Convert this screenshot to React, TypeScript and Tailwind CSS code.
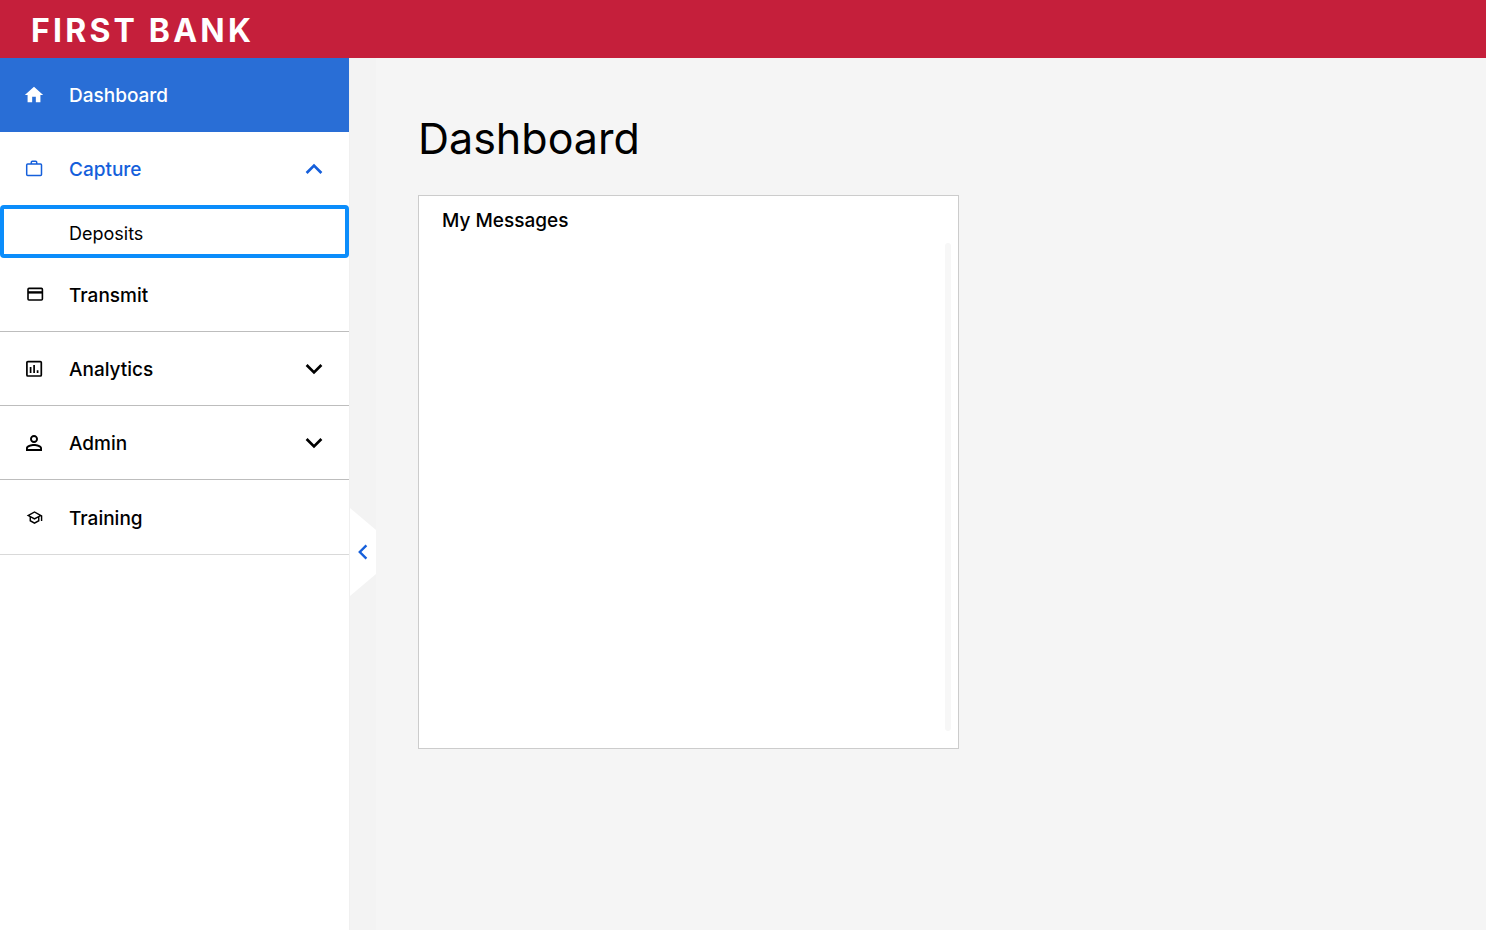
import React, { useState } from 'react';
import clsx from 'clsx';
import { MdHome, MdPersonOutline, MdOutlineSchool } from 'react-icons/md';

type IconType = React.ComponentType<{ className?: string }>;

interface NavItem {
  label: string;
  icon: IconType;
  iconClass: string;
  children?: string[];
}

const CaptureIcon = ({ className }: { className?: string }) => (
  <svg viewBox="0 0 20 20" fill="none" stroke="currentColor" strokeWidth="1.5" className={className}>
    <rect x="2.7" y="5" width="14.8" height="11.4" rx="1" />
    <path d="M7.3 5V3.2a1 1 0 0 1 1-1h3.4a1 1 0 0 1 1 1V5" />
  </svg>
);

const TransmitIcon = ({ className }: { className?: string }) => (
  <svg viewBox="0 0 20 20" fill="none" stroke="currentColor" strokeWidth="1.6" className={className}>
    <rect x="4" y="3.4" width="14.4" height="11.6" rx="1" />
    <path d="M4 7.4h14.4" strokeWidth="2.4" />
  </svg>
);

const AnalyticsIcon = ({ className }: { className?: string }) => (
  <svg viewBox="0 0 20 20" fill="none" stroke="currentColor" strokeWidth="1.7" className={className}>
    <rect x="2.9" y="2.6" width="14.4" height="14.4" rx="1" />
    <path d="M6.6 8v6M10.1 6v8M13.6 11.2V14" />
  </svg>
);

const Chevron = ({ open }: { open: boolean }) => (
  <svg
    viewBox="0 0 20 20"
    fill="none"
    stroke="currentColor"
    strokeWidth="2.7"
    className={clsx('size-5 shrink-0', open && 'rotate-180')}
  >
    <path d="M2.6 6 10 13.4 17.4 6" />
  </svg>
);

const navItems: NavItem[] = [
  { label: 'Dashboard', icon: MdHome, iconClass: 'size-[22px]' },
  { label: 'Capture', icon: CaptureIcon, iconClass: 'size-5', children: ['Deposits'] },
  { label: 'Transmit', icon: TransmitIcon, iconClass: 'size-5' },
  { label: 'Analytics', icon: AnalyticsIcon, iconClass: 'size-5', children: [] },
  { label: 'Admin', icon: MdPersonOutline, iconClass: 'size-6', children: [] },
  { label: 'Training', icon: MdOutlineSchool, iconClass: 'size-[17px]' },
];

const Sidebar = () => {
  const [active, setActive] = useState('Dashboard');
  const [openItem, setOpenItem] = useState('Capture');

  return (
    <nav className="w-[349px] shrink-0 bg-white">
      {navItems.map((item) => {
        const Icon = item.icon;
        const isActive = active === item.label;
        const isOpen = openItem === item.label;
        const rowClass = clsx(
          'flex w-full items-center gap-[23px] pr-[25px] pl-[22px] text-left text-[19px] font-medium',
          isOpen ? 'h-[73px]' : 'h-[74px] border-b',
          isActive && 'border-[#296ed6] bg-[#296ed6] text-white',
          !isActive && isOpen && 'text-[#155fdb]',
          !isActive && !isOpen && 'border-[#bdbdbd] text-black group-last:h-[75px] group-last:border-[#d9d9d9]'
        );
        const icon = (
          <span className="flex w-6 shrink-0 justify-center">
            <Icon className={clsx('shrink-0', item.iconClass)} />
          </span>
        );

        return (
          <div key={item.label} className="group">
            {item.children ? (
              <button
                type="button"
                aria-expanded={isOpen}
                className={rowClass}
                onClick={() => setOpenItem(isOpen ? '' : item.label)}
              >
                {icon}
                <span className="flex-1 pt-1">{item.label}</span>
                <Chevron open={isOpen} />
              </button>
            ) : (
              <a href="#" className={rowClass} onClick={() => setActive(item.label)}>
                {icon}
                <span className="pt-1">{item.label}</span>
              </a>
            )}
            {isOpen &&
              item.children?.map((child) => (
                <a
                  key={child}
                  href="#"
                  className="flex h-[53px] items-center rounded-sm border-4 border-[#0b8dfb] pt-1 pl-[65px] text-lg text-black"
                >
                  {child}
                </a>
              ))}
          </div>
        );
      })}
    </nav>
  );
};

const App = () => {
  return (
    <div className="flex min-h-screen flex-col bg-[#f5f5f5] font-['Inter',sans-serif] text-black">
      <header className="flex h-[58px] items-center bg-[#c51f3b] px-[31px] pt-1">
        <span className="text-[32px] font-bold tracking-widest text-white">FIRST BANK</span>
      </header>

      <div className="flex flex-1">
        <Sidebar />
        <div className="mr-3.5 flex w-[27px] shrink-0 items-center border-l border-[#f0f0f0] bg-[#f3f3f3]">
          <button
            type="button"
            aria-label="Collapse menu"
            className="mt-[116px] flex h-[88px] w-[26px] items-center justify-center bg-white text-[#155fdb] [clip-path:polygon(0_0,100%_25%,100%_75%,0_100%)]"
          >
            <svg viewBox="0 0 16 16" fill="none" stroke="currentColor" strokeWidth="2.4" className="size-4">
              <path d="M11.4 1.4 4.8 8l6.6 6.6" />
            </svg>
          </button>
        </div>

        <main className="flex-1 px-7 pt-[52px]">
          <h1 className="text-[43px] leading-[56px]">Dashboard</h1>
          <section className="mt-[29px] flex h-[554px] max-w-[541px] flex-col border border-[#cccccc] bg-white pt-[11px] pr-[7px] pb-[17px] pl-[23px]">
            <h2 className="text-[19px] leading-7 font-medium">My Messages</h2>
            <div className="mt-2 flex flex-1 justify-end">
              <div className="w-1.5 rounded-full bg-[#f7f7f7]" />
            </div>
          </section>
        </main>
      </div>
    </div>
  );
};

export default App;
